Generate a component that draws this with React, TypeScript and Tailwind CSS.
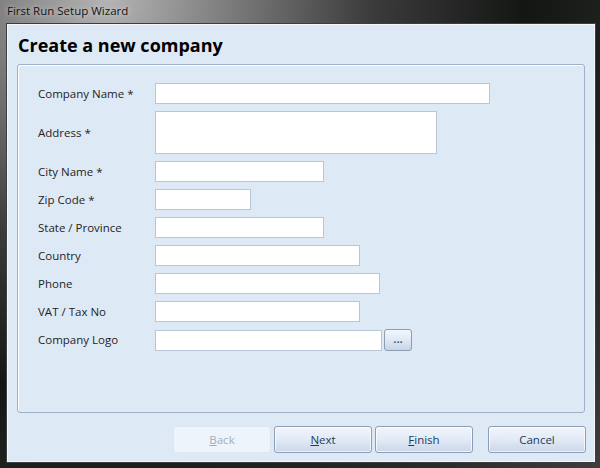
import React from "react"

const font = { fontFamily: '"Open Sans", "Noto Sans", Arial, sans-serif' }

const fields: { label: string; w: number; tall?: boolean; browse?: boolean }[] = [
  { label: "Company Name *", w: 335 },
  { label: "Address *", w: 282, tall: true },
  { label: "City Name *", w: 169 },
  { label: "Zip Code *", w: 96 },
  { label: "State / Province", w: 169 },
  { label: "Country", w: 205 },
  { label: "Phone", w: 225 },
  { label: "VAT / Tax No", w: 205 },
  { label: "Company Logo", w: 227, browse: true },
]

function WizButton({ label, disabled }: { label: string; disabled?: boolean }) {
  const first = label.slice(0, 1)
  const rest = label.slice(1)
  if (disabled) {
    return (
      <div className="flex h-[27px] w-[98px] items-center justify-center rounded-[3px] border border-[#dce6f2] bg-[#eef4fb] text-[11.5px] text-[#a3adba]">
        <span className="underline">{first}</span>
        {rest}
      </div>
    )
  }
  return (
    <div className="flex h-[27px] w-[98px] items-center justify-center rounded-[3px] border border-[#8d9db3] bg-gradient-to-b from-[#f2f6fb] via-[#e2eaf5] to-[#c9d7ea] text-[11.5px] text-[#1c3a5e] shadow-[inset_0_0_0_1px_rgba(255,255,255,0.7)]">
      {label === "Cancel" ? (
        label
      ) : (
        <>
          <span className="underline">{first}</span>
          {rest}
        </>
      )}
    </div>
  )
}

export default function App() {
  return (
    <div
      className="flex h-[468px] w-[600px] flex-col overflow-hidden bg-[radial-gradient(ellipse_at_18%_0%,#b4b4b4_0%,#7a7a7a_18%,#3a3b3a_38%,#141614_60%,#2a2c2a_85%,#3e3e3e_100%)]"
      style={font}
    >
      <div className="flex h-[24px] shrink-0 items-center pl-[7px] pb-[2px] text-[11.5px] text-[#121212] [text-shadow:0_0_5px_rgba(230,230,230,0.9)]">
        First Run Setup Wizard
      </div>
      <div className="ml-[7px] mr-[5px] flex h-[438px] flex-col border border-[#f4f7fb] bg-[#dee9f6] shadow-[0_0_0_1px_#3d3d3d]">
        <div className="flex h-[39px] shrink-0 items-center pl-[10px] pt-[1px] text-[18px] font-bold text-black">
          Create a new company
        </div>
        <div className="mx-[9px] h-[349px] rounded-[3px] border border-[#9fb1c9] shadow-[inset_1px_1px_0_#ffffff]">
          <div className="flex flex-col gap-[7px] pl-[20px] pt-[18px]">
            {fields.map((f) => (
              <div key={f.label} className="flex items-center">
                <div className="w-[117px] text-[11.5px] text-[#1e1e1e]">{f.label}</div>
                <div
                  className={`${f.tall ? "h-[43px]" : "h-[21px]"} border border-[#b7c6d9] bg-white`}
                  style={{ width: f.w }}
                />
                {f.browse && (
                  <div className="ml-[2px] flex h-[22px] w-[28px] items-center justify-center rounded-[3px] border border-[#8d9db3] bg-gradient-to-b from-[#f2f6fb] via-[#e0e9f4] to-[#c6d5e8] pb-[4px] text-[11px] font-bold leading-none text-[#3a5b85]">
                    ...
                  </div>
                )}
              </div>
            ))}
          </div>
        </div>
        <div className="flex justify-end gap-[3px] pr-[8px] pt-[13px]">
          <WizButton label="Back" disabled />
          <WizButton label="Next" />
          <div className="flex gap-[15px]">
            <WizButton label="Finish" />
            <WizButton label="Cancel" />
          </div>
        </div>
      </div>
    </div>
  )
}
